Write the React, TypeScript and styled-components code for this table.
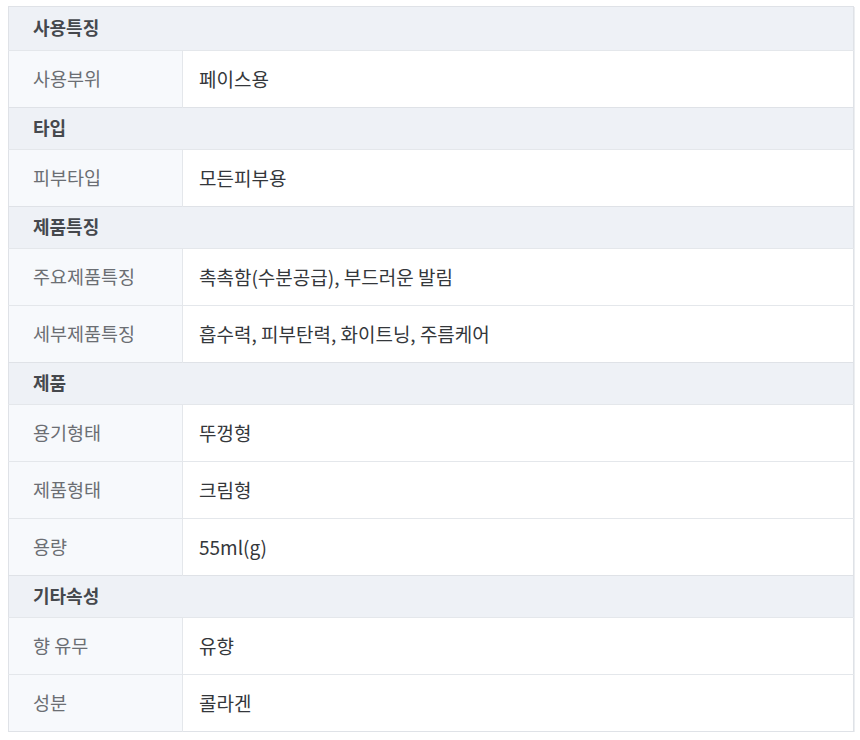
import styled, { createGlobalStyle } from 'styled-components';

const GlobalStyle = createGlobalStyle`
  body {
    margin: 0;
    background: #ffffff;
    font-family: 'Noto Sans CJK KR', 'Noto Sans', sans-serif;
  }
`;

const Wrap = styled.div`
  padding: 6px 6px 0 8px;
`;

const Table = styled.table`
  width: 100%;
  border-collapse: collapse;
  border: 1px solid #dfe2e7;
  box-shadow: 1px 1px 0 #eceef1;
  table-layout: fixed;
`;

const SectionCell = styled.th<{ $first?: boolean }>`
  height: ${(p) => (p.$first ? 40 : 38)}px;
  padding: 0 24px 3px;
  background: #eef1f6;
  border-top: 1px solid #dfe2e7;
  text-align: left;
  font-size: 18px;
  font-weight: 700;
  color: #45484d;
`;

const LabelCell = styled.td`
  height: 54px;
  padding: 0 0 2px 24px;
  background: #f7f9fc;
  border-top: 1px solid #e4e7eb;
  border-right: 1px solid #e4e7eb;
  font-size: 18.5px;
  color: #6b6e73;
`;

const ValueCell = styled.td`
  height: 54px;
  padding: 0 16px 2px;
  background: #ffffff;
  border-top: 1px solid #e4e7eb;
  font-size: 19px;
  color: #34373b;
`;

type Section = {
  title: string;
  rows: [string, string][];
};

const sections: Section[] = [
  { title: '사용특징', rows: [['사용부위', '페이스용']] },
  { title: '타입', rows: [['피부타입', '모든피부용']] },
  {
    title: '제품특징',
    rows: [
      ['주요제품특징', '촉촉함(수분공급), 부드러운 발림'],
      ['세부제품특징', '흡수력, 피부탄력, 화이트닝, 주름케어'],
    ],
  },
  {
    title: '제품',
    rows: [
      ['용기형태', '뚜껑형'],
      ['제품형태', '크림형'],
      ['용량', '55ml(g)'],
    ],
  },
  {
    title: '기타속성',
    rows: [
      ['향 유무', '유향'],
      ['성분', '콜라겐'],
    ],
  },
];

export default function App() {
  return (
    <>
      <GlobalStyle />
      <Wrap>
        <Table>
          <colgroup>
            <col style={{ width: 174 }} />
            <col />
          </colgroup>
          <tbody>
            {sections.map((s, i) => (
              <SectionRows key={s.title} section={s} first={i === 0} />
            ))}
          </tbody>
        </Table>
      </Wrap>
    </>
  );
}

function SectionRows({ section, first }: { section: Section; first: boolean }) {
  return (
    <>
      <tr>
        <SectionCell colSpan={2} $first={first}>
          {section.title}
        </SectionCell>
      </tr>
      {section.rows.map(([label, value]) => (
        <tr key={label}>
          <LabelCell>{label}</LabelCell>
          <ValueCell>{value}</ValueCell>
        </tr>
      ))}
    </>
  );
}
